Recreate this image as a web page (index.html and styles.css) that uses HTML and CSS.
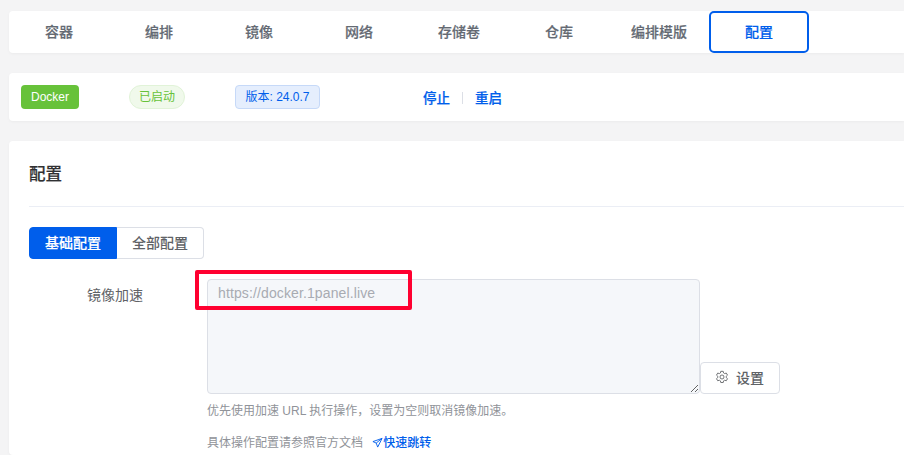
FILE: index.html
```html
<!DOCTYPE html>
<html lang="zh-CN">
<head>
<meta charset="utf-8">
<title>配置</title>
<link rel="stylesheet" href="styles.css">
</head>
<body>
<div class="page">
  <nav class="card nav">
    <a class="nav-item">容器</a>
    <a class="nav-item">编排</a>
    <a class="nav-item">镜像</a>
    <a class="nav-item">网络</a>
    <a class="nav-item">存储卷</a>
    <a class="nav-item">仓库</a>
    <a class="nav-item">编排模版</a>
    <a class="nav-item active">配置</a>
  </nav>
  <section class="card status">
    <span class="tag-docker">Docker</span>
    <span class="tag-running">已启动</span>
    <span class="tag-version">版本: 24.0.7</span>
    <div class="actions">
      <a class="action">停止</a>
      <span class="sep"></span>
      <a class="action">重启</a>
    </div>
  </section>
  <section class="card main">
    <h2 class="title">配置</h2>
    <div class="tabs">
      <button class="tab tab-on">基础配置</button>
      <button class="tab tab-off">全部配置</button>
    </div>
    <div class="form-row">
      <label class="label">镜像加速</label>
      <div class="field">
        <div class="field-top">
          <textarea class="mirror" disabled>https://docker.1panel.live</textarea>
          <button class="set-btn">
            <svg class="gear" viewBox="0 0 16 16" width="14" height="14" fill="none" stroke="#606266" stroke-width="1" stroke-linejoin="round"><path d="M6.6 1.5h2.8l.4 1.9 1.2.7 1.9-.6 1.4 2.4-1.5 1.3v1.4l1.5 1.3-1.4 2.4-1.9-.6-1.2.7-.4 1.9H6.6l-.4-1.9-1.2-.7-1.9.6-1.4-2.4 1.5-1.3V7.2L1.7 5.9l1.4-2.4 1.9.6 1.2-.7z"/><circle cx="8" cy="8" r="2.3"/></svg>
            <span>设置</span>
          </button>
        </div>
        <p class="help">优先使用加速 URL 执行操作，设置为空则取消镜像加速。</p>
        <p class="help help-doc">具体操作配置请参照官方文档
          <a class="jump"><svg class="send" viewBox="0 0 12 12" width="11" height="11" fill="none" stroke="#005eeb" stroke-width="1" stroke-linejoin="round"><path d="M11 1.5 1 5l3.6 1.6L6.2 11z"/><path d="M11 1.5 4.6 6.6"/></svg>快速跳转</a>
        </p>
      </div>
    </div>
    <div class="highlight"></div>
  </section>
</div>
</body>
</html>
```
FILE: styles.css
```css
* { box-sizing: border-box; }
html, body { margin: 0; height: 100%; overflow: hidden; }
body {
  background: #f4f4f5;
  font-family: "Liberation Sans", "Noto Sans CJK SC", sans-serif;
  color: #606266;
}
.page {
  width: 904px;
  padding: 11px 0 0 9px;
}
.card {
  background: #fff;
  border-radius: 4px 0 0 4px;
  box-shadow: 0 1px 3px rgba(0, 0, 0, 0.04);
}
.nav {
  display: flex;
  height: 42px;
}
.nav-item {
  width: 100px;
  display: flex;
  align-items: center;
  justify-content: center;
  padding-bottom: 2px;
  font-size: 14px;
  font-weight: 500;
  color: #646a73;
  border-radius: 4px;
  -webkit-text-stroke: 0.2px #646a73;
}
.nav-item.active {
  color: #005eeb;
  border: 2px solid #005eeb;
  border-radius: 5px;
  -webkit-text-stroke: 0.2px #005eeb;
}
.status {
  margin-top: 20px;
  height: 48px;
  padding: 12px;
  display: flex;
  align-items: flex-start;
  font-size: 12px;
}
.tag-docker {
  width: 58px;
  height: 24px;
  line-height: 24px;
  text-align: center;
  background: #67c23a;
  color: #fff;
  border-radius: 4px;
}
.tag-running {
  margin-left: 50px;
  width: 56px;
  height: 24px;
  line-height: 22px;
  text-align: center;
  color: #67c23a;
  background: #f0f9eb;
  border: 1px solid #e1f3d8;
  border-radius: 12px;
}
.tag-version {
  margin-left: 50px;
  width: 85px;
  height: 24px;
  line-height: 22px;
  text-align: center;
  color: #005eeb;
  background: #e5eefd;
  border: 1px solid #c6d9f8;
  border-radius: 4px;
}
.actions {
  margin-left: 103px;
  height: 24px;
  display: flex;
  align-items: center;
}
.action {
  font-size: 13.5px;
  font-weight: 500;
  color: #005eeb;
  -webkit-text-stroke: 0.2px #005eeb;
}
.sep {
  width: 1px;
  height: 12px;
  margin: 2px 12px 0;
  background: #dcdfe6;
}
.main {
  position: relative;
  margin-top: 20px;
  height: 314px;
  padding: 20px 0 0 20px;
}
.title {
  margin: 0;
  height: 46px;
  font-size: 16.5px;
  line-height: 26px;
  font-weight: 500;
  color: #303133;
  -webkit-text-stroke: 0.2px #303133;
}
.title::after {
  content: "";
  display: block;
  height: 1px;
  margin-top: 19px;
  background: #ebeef5;
}
.tabs {
  display: flex;
  margin-top: 20px;
}
.tab {
  height: 32px;
  padding: 0 0 2px;
  font: 500 14px "Liberation Sans", "Noto Sans CJK SC", sans-serif;
}
.tab-on {
  width: 88px;
  color: #fff;
  background: #005eeb;
  border: 1px solid #005eeb;
  border-radius: 4px 0 0 4px;
  -webkit-text-stroke: 0.2px #fff;
}
.tab-off {
  width: 87px;
  color: #606266;
  background: #fff;
  border: 1px solid #dcdfe6;
  border-left: 0;
  border-radius: 0 4px 4px 0;
}
.form-row {
  display: flex;
  margin-top: 20px;
}
.label {
  width: 114px;
  padding-top: 7px;
  font-size: 14px;
  line-height: 18px;
  text-align: right;
  color: #606266;
}
.field {
  margin-left: 64px;
}
.field-top {
  display: flex;
  align-items: flex-end;
}
.mirror {
  width: 493px;
  height: 115px;
  padding: 3px 10px;
  margin: 0;
  display: block;
  font: 14px/1.5 "Liberation Sans", "Noto Sans CJK SC", sans-serif;
  letter-spacing: 0.12px;
  color: #a8abb2;
  background: #f5f7fa;
  border: 1px solid #dcdfe6;
  border-radius: 4px;
}
.set-btn {
  width: 80px;
  height: 32px;
  display: flex;
  align-items: center;
  justify-content: center;
  gap: 7px;
  padding: 0 1px 2px 0;
  font: 500 14px "Liberation Sans", "Noto Sans CJK SC", sans-serif;
  color: #606266;
  background: #fff;
  border: 1px solid #dcdfe6;
  border-radius: 4px;
}
.help {
  margin: 9px 0 0;
  font-size: 12px;
  line-height: 16px;
  color: #909399;
}
.help-doc {
  margin-top: 16px;
}
.jump {
  margin-left: 6px;
  font-weight: 500;
  color: #005eeb;
}
.send {
  vertical-align: -1px;
}
.highlight {
  position: absolute;
  left: 186px;
  top: 129px;
  width: 217px;
  height: 40px;
  border: 4px solid #ff0030;
  border-radius: 2px;
}
```
